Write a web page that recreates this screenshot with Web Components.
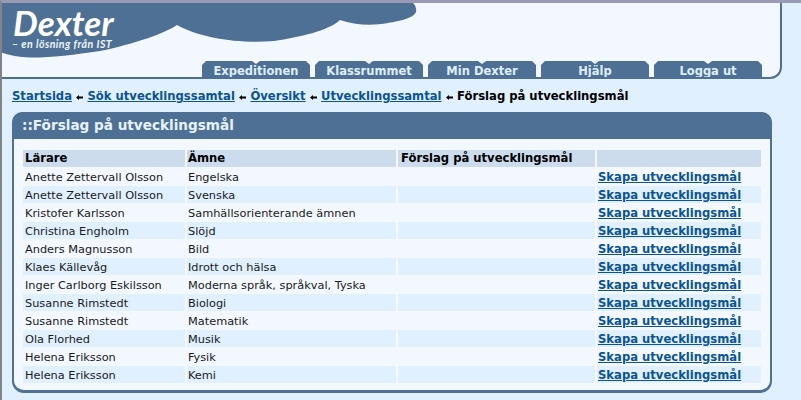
<!DOCTYPE html>
<html lang="sv">
<head>
<meta charset="utf-8">
<title>Dexter</title>
<style>
    html, body { margin: 0; height: 100%; overflow: hidden; }
    body {
        background: #e0f0ff;
        font-family: "DejaVu Sans", Verdana, sans-serif;
        font-size: 11.33px;
        color: #1a1a1a;
    }
</style>
</head>
<body>
<dx-app>
    <dx-header>
        <dx-tab>Expeditionen</dx-tab>
        <dx-tab>Klassrummet</dx-tab>
        <dx-tab>Min Dexter</dx-tab>
        <dx-tab>Hjälp</dx-tab>
        <dx-tab>Logga ut</dx-tab>
    </dx-header>
    <dx-crumbs>
        <dx-crumb href="#">Startsida</dx-crumb>
        <dx-crumb href="#">Sök utvecklingssamtal</dx-crumb>
        <dx-crumb href="#">Översikt</dx-crumb>
        <dx-crumb href="#">Utvecklingssamtal</dx-crumb>
        <dx-crumb>Förslag på utvecklingsmål</dx-crumb>
    </dx-crumbs>
    <dx-panel heading="::Förslag på utvecklingsmål">
        <dx-row head teacher="Lärare" subject="Ämne" goal="Förslag på utvecklingsmål"></dx-row>
        <dx-row teacher="Anette Zettervall Olsson" subject="Engelska"></dx-row>
        <dx-row alt teacher="Anette Zettervall Olsson" subject="Svenska"></dx-row>
        <dx-row teacher="Kristofer Karlsson" subject="Samhällsorienterande ämnen"></dx-row>
        <dx-row alt teacher="Christina Engholm" subject="Slöjd"></dx-row>
        <dx-row teacher="Anders Magnusson" subject="Bild"></dx-row>
        <dx-row alt teacher="Klaes Källevåg" subject="Idrott och hälsa"></dx-row>
        <dx-row teacher="Inger Carlborg Eskilsson" subject="Moderna språk, språkval, Tyska"></dx-row>
        <dx-row alt teacher="Susanne Rimstedt" subject="Biologi"></dx-row>
        <dx-row teacher="Susanne Rimstedt" subject="Matematik"></dx-row>
        <dx-row alt teacher="Ola Florhed" subject="Musik"></dx-row>
        <dx-row teacher="Helena Eriksson" subject="Fysik"></dx-row>
        <dx-row alt teacher="Helena Eriksson" subject="Kemi"></dx-row>
    </dx-panel>
</dx-app>

<script>
class DxApp extends HTMLElement {
    constructor() {
        super();
        this.attachShadow({ mode: 'open' }).innerHTML = `
            <style>
                :host {
                    display: flex;
                    flex-direction: column;
                    height: 400px;
                    box-sizing: border-box;
                    border-top: 3px solid #9a9ab4;
                    border-left: 2px solid #808488;
                }
            </style>
            <slot></slot>
        `;
    }
}

class DxHeader extends HTMLElement {
    constructor() {
        super();
        this.attachShadow({ mode: 'open' }).innerHTML = `
            <style>
                :host {
                    display: flex;
                    position: relative;
                    box-sizing: border-box;
                    flex: none;
                    width: 780px;
                    height: 76px;
                    background: #f2f8fe;
                    border-right: 2px solid #4e7094;
                    border-bottom: 2px solid #4e7094;
                    border-bottom-right-radius: 12px;
                    align-items: flex-end;
                    gap: 5px;
                    padding-left: 200px;
                }
                svg { position: absolute; left: 0; top: 0; }
                .logo {
                    position: absolute; left: 10px; top: 4px;
                    display: flex;
                    flex-direction: column;
                    gap: 1px;
                    color: #fff;
                    white-space: nowrap;
                }
                .name { font: italic 700 35px/30px Lato, sans-serif; margin-left: 1px; }
                .tag { font: italic 700 10.6px/12px Lato, sans-serif; letter-spacing: .45px; color: #eef5fb; }
            </style>
            <svg width="420" height="60" viewBox="2 3 420 60">
                <path fill="#4e7094" d="M0 0 H408 C414 2 417 7 416 12 C414 18 400 21 388 23
                    C372 26 354 25 340 20 C328 31 300 37 274 41 C240 44 200 38 177 25
                    C165 33 135 44 100 51 C75 55 45 58 30 57.5 C18 57 8 55 0 52 Z"/>
            </svg>
            <div class="logo">
                <span class="name">Dexter</span>
                <span class="tag">– en lösning från IST</span>
            </div>
            <slot></slot>
        `;
    }
}

class DxTab extends HTMLElement {
    constructor() {
        super();
        this.attachShadow({ mode: 'open' }).innerHTML = `
            <style>
                :host {
                    display: block;
                    position: relative;
                    width: 108px;
                    height: 16px;
                    background: #4e7094;
                    color: #dfeefc;
                    font-weight: bold;
                    font-size: 11.5px;
                    line-height: 21px;
                    text-align: center;
                    overflow: hidden;
                    clip-path: polygon(0 100%, 0 4px, 4px 0, 50px 0, 54px 3px, 58px 0, 104px 0, 108px 4px, 108px 100%);
                }
            </style>
            <slot></slot>
        `;
    }
}

class DxCrumbs extends HTMLElement {
    constructor() {
        super();
        this.attachShadow({ mode: 'open' }).innerHTML = `
            <style>
                :host {
                    display: flex;
                    flex: none;
                    align-items: center;
                    box-sizing: border-box;
                    height: 33px;
                    padding: 1px 0 0 10px;
                    font-weight: bold;
                    font-size: 11.6px;
                    color: #000;
                    white-space: nowrap;
                }
            </style>
            <slot></slot>
        `;
    }
}

class DxCrumb extends HTMLElement {
    constructor() {
        super();
        const link = this.hasAttribute('href');
        this.attachShadow({ mode: 'open' }).innerHTML = `
            <style>
                :host { display: inline-flex; align-items: center; }
                a { color: #0b5394; text-decoration: underline; }
                svg { margin: 2px 4px 0 4.5px; }
            </style>
            ${link ? `<a href="${this.getAttribute('href')}"><slot></slot></a>
            <svg width="7" height="5" viewBox="0 0 7 5"><path d="M0 2.5 L3 0 V1.5 H7 V3.5 H3 V5 Z"/></svg>` : '<slot></slot>'}
        `;
    }
}

class DxPanel extends HTMLElement {
    constructor() {
        super();
        this.attachShadow({ mode: 'open' }).innerHTML = `
            <style>
                :host {
                    display: block;
                    flex: none;
                    box-sizing: border-box;
                    width: 760px;
                    height: 281px;
                    margin-left: 10px;
                    background: #f2f8fe;
                    border: solid #4e7094;
                    border-width: 0 2px 3px 2px;
                    border-radius: 12px;
                }
                h2 {
                    margin: 0 -2px;
                    height: 27px;
                    padding-left: 10px;
                    background: #4e7094;
                    border-radius: 10px 10px 0 0;
                    color: #e6f2fd;
                    font-size: 13.6px;
                    line-height: 27px;
                    font-weight: bold;
                }
                .rows {
                    display: grid;
                    grid-auto-rows: 17px;
                    row-gap: 1px;
                    margin: 11px 9px 0 9px;
                }
            </style>
            <h2>${this.getAttribute('heading')}</h2>
            <div class="rows"><slot></slot></div>
        `;
    }
}

class DxRow extends HTMLElement {
    constructor() {
        super();
        const head = this.hasAttribute('head');
        const goal = this.getAttribute('goal') || '';
        this.attachShadow({ mode: 'open' }).innerHTML = `
            <style>
                :host {
                    display: grid;
                    grid-template-columns: 162px 209px 197px 164px;
                    column-gap: 2px;
                    line-height: 18px;
                    white-space: nowrap;
                }
                div { padding-left: 2px; overflow: hidden; background: transparent; }
                div:nth-of-type(2) { padding-left: 1px; }
                div:nth-of-type(3) { padding-left: 3px; }
                div:nth-of-type(4) { padding-left: 1px; }
                :host([alt]) div { background: #e0f0ff; }
                :host([head]) div { background: #ccdcec; color: #000; font-weight: bold; font-size: 11.6px; line-height: 17px; }
                a { color: #0b5394; font-weight: bold; font-size: 11.6px; }
            </style>
            <div>${this.getAttribute('teacher')}</div>
            <div>${this.getAttribute('subject')}</div>
            <div>${goal}</div>
            <div>${head ? '' : '<a href="#">Skapa utvecklingsmål</a>'}</div>
        `;
    }
}

customElements.define('dx-app', DxApp);
customElements.define('dx-header', DxHeader);
customElements.define('dx-tab', DxTab);
customElements.define('dx-crumbs', DxCrumbs);
customElements.define('dx-crumb', DxCrumb);
customElements.define('dx-panel', DxPanel);
customElements.define('dx-row', DxRow);
</script>
</body>
</html>
